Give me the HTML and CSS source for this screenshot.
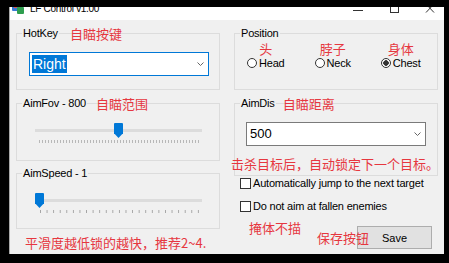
FILE: index.html
```html
<!DOCTYPE html>
<html lang="en">
<head>
  <meta charset="UTF-8" />
  <meta name="viewport" content="width=device-width, initial-scale=1.0" />
  <title>LF Control v1.00</title>
  <link rel="stylesheet" href="styles.css">
</head>
<body>
  <div class="window">
    <div class="titlebar">
      <svg class="app-icon" viewBox="0 0 14 14">
        <rect x="1" y="2" width="8" height="8" rx="1" fill="#3a7bd5"/>
        <rect x="6" y="6" width="7" height="7" rx="1" fill="#2e9e4f"/>
        <rect x="3" y="4" width="3" height="3" fill="#d9534f"/>
      </svg>
      <span class="title">LF Control v1.00</span>
      <div class="caption">
        <svg class="cap-btn" viewBox="0 0 10 10"><line x1="0" y1="6.5" x2="10" y2="6.5" stroke="#333" /></svg>
        <svg class="cap-btn" viewBox="0 0 10 10"><rect x="1.5" y="0.5" width="8" height="8" fill="none" stroke="#333" /></svg>
        <svg class="cap-btn" viewBox="0 0 10 10"><path d="M1 0 L9 8.5 M9 0 L1 8.5" stroke="#333" /></svg>
      </div>
    </div>

    <div class="client">
      <div class="col">
        <div class="group g-hotkey">
          <div class="legend"><span class="legend-text">HotKey</span><span class="note wide">自瞄按键</span></div>
          <div class="combo focused">
            <span class="combo-value selected">Right</span>
            <svg class="chev" viewBox="0 0 7 4"><polyline points="0.5,0.5 3.5,3.5 6.5,0.5" fill="none" stroke="#666" /></svg>
          </div>
        </div>

        <div class="group g-fov">
          <div class="legend"><span class="legend-text">AimFov - 800</span><span class="note">自瞄范围</span></div>
          <div class="slider">
            <div class="track"><span class="thumb" style="--p: 0.5"></span></div>
            <div class="ticks dense"></div>
          </div>
        </div>

        <div class="group g-speed">
          <div class="legend"><span class="legend-text">AimSpeed - 1</span></div>
          <div class="slider">
            <div class="track"><span class="thumb" style="--p: 0"></span></div>
            <div class="ticks sparse"></div>
          </div>
        </div>

        <p class="note note-bottom">平滑度越低锁的越快，推荐2~4.</p>
      </div>

      <div class="col col-right">
        <div class="group g-position">
          <div class="legend"><span class="legend-text">Position</span></div>
          <div class="radios">
            <div class="radio-item">
              <span class="note">头</span>
              <label class="radio"><span class="dot"></span>Head</label>
            </div>
            <div class="radio-item">
              <span class="note">脖子</span>
              <label class="radio"><span class="dot"></span>Neck</label>
            </div>
            <div class="radio-item">
              <span class="note">身体</span>
              <label class="radio"><span class="dot checked"></span>Chest</label>
            </div>
          </div>
        </div>

        <div class="group g-dis">
          <div class="legend"><span class="legend-text">AimDis</span><span class="note narrow">自瞄距离</span></div>
          <div class="combo">
            <span class="combo-value plain">500</span>
            <svg class="chev" viewBox="0 0 7 4"><polyline points="0.5,0.5 3.5,3.5 6.5,0.5" fill="none" stroke="#666" /></svg>
          </div>
        </div>

        <label class="check first"><span class="box"></span>Automatically jump to the next target</label>
        <label class="check"><span class="box"></span>Do not aim at fallen enemies</label>

        <div class="actions">
          <button class="btn">Save</button>
        </div>

        <span class="note tip tip-kill">击杀目标后，自动锁定下一个目标。</span>
        <span class="note tip tip-cover">掩体不描</span>
        <span class="note tip tip-save">保存按钮</span>
      </div>
    </div>
  </div>
</body>
</html>
```

FILE: styles.css
```css
body {
  margin: 0;
  background: #000;
  font-family: "Liberation Sans", Arial, sans-serif;
  font-size: 11px;
  letter-spacing: -0.2px;
  color: #000;
}
.window {
  margin: 7px 0 0 9px;
  width: 435px;
  height: 247px;
  box-sizing: border-box;
  border-left: 1px solid #a8a8a8;
  background: #f0f0f0;
  overflow: hidden;
}

/* title bar, top part is cut off by the screen edge */
.titlebar {
  height: 13px;
  background: #fff;
  display: flex;
  align-items: flex-start;
  overflow: hidden;
}
.app-icon {
  flex: none;
  width: 14px;
  height: 14px;
  margin: -6px 0 0 1px;
}
.title {
  font-size: 10px;
  line-height: 12px;
  letter-spacing: -0.3px;
  margin: -4px 0 0 5px;
  white-space: nowrap;
}
.caption {
  display: flex;
  margin: -3px 9px 0 auto;
}
.cap-btn {
  width: 10px;
  height: 10px;
}
.cap-btn + .cap-btn {
  margin-left: 26px;
}

.client {
  display: grid;
  grid-template-columns: 204px 204px;
  column-gap: 14px;
  padding: 13px 0 0 6px;
}
.col-right {
  position: relative;
}

/* group boxes */
.group {
  position: relative;
  box-sizing: border-box;
  border: 1px solid #dcdcdc;
}
.legend {
  position: absolute;
  top: -8px;
  left: 5px;
  display: flex;
  align-items: center;
  line-height: 14px;
  white-space: nowrap;
}
.legend-text {
  background: #f0f0f0;
  padding: 0 1px;
}
.legend .note {
  margin-left: 9px;
}
.legend .note.wide {
  margin-left: 11px;
}
.legend .note.narrow {
  margin-left: 7px;
}
.g-hotkey,
.g-position {
  height: 57px;
}
.g-fov {
  height: 58px;
  margin-top: 13px;
}
.g-speed {
  height: 56px;
  margin-top: 12px;
}
.g-dis {
  height: 73px;
  margin-top: 13px;
}

/* red notes */
.note {
  color: #e6373f;
  font-family: "Noto Sans CJK SC", sans-serif;
  font-size: 13px;
  line-height: 13px;
  letter-spacing: 0;
  white-space: nowrap;
}
.note-bottom {
  margin: 7px 0 0 9px;
}
.tip {
  position: absolute;
}
.tip-kill {
  left: -3px;
  top: 124px;
}
.tip-cover {
  left: 15px;
  top: 188px;
}
.tip-save {
  left: 83px;
  top: 198px;
}

/* combobox */
.combo {
  display: flex;
  align-items: center;
  box-sizing: border-box;
  width: 180px;
  height: 24px;
  margin: 18px 0 0 11px;
  padding: 0 4px 0 2px;
  background: #fff;
  border: 1px solid #7a7a7a;
}
.g-hotkey .combo {
  margin-left: 12px;
}
.combo.focused {
  border-color: #0078d7;
}
.combo-value {
  line-height: 18px;
  letter-spacing: 0;
}
.combo-value.selected {
  font-size: 14px;
  background: #0078d7;
  color: #fff;
  padding: 0 1px;
}
.combo-value.plain {
  font-size: 13px;
  padding-left: 1px;
}
.chev {
  width: 7px;
  height: 4px;
  margin-left: auto;
}

/* sliders */
.slider {
  width: 167px;
  margin: 25px 0 0 18px;
}
.track {
  position: relative;
  height: 3px;
  background: #dcdcdc;
}
.thumb {
  position: absolute;
  top: -6px;
  left: calc(var(--p) * (100% - 9px));
  width: 9px;
  height: 15px;
  background: #0078d7;
  border-radius: 1px;
  clip-path: polygon(0 0, 100% 0, 100% 68%, 50% 100%, 0 68%);
}
.ticks {
  height: 3px;
  margin-top: 8px;
}
.ticks.dense {
  width: 160px;
  margin-left: 4px;
  background: repeating-linear-gradient(90deg, #b8b8b8 0 1px, transparent 1px 3px);
}
.ticks.sparse {
  width: 159px;
  margin-left: 5px;
  background: linear-gradient(90deg, #a4a4a4 1px, transparent 1px) 0 0 / 6.58px 100%;
}

/* radios */
.radios {
  display: flex;
  gap: 30px;
  padding: 8px 0 0 12px;
}
.radio-item {
  display: flex;
  flex-direction: column;
  align-items: center;
}
.radio-item .note {
  margin-bottom: 2px;
}
.radio {
  display: flex;
  align-items: center;
  gap: 2px;
  height: 12px;
  line-height: 12px;
}
.dot {
  width: 10px;
  height: 10px;
  box-sizing: border-box;
  border: 1px solid #333;
  border-radius: 50%;
  background: #fff;
}
.dot.checked {
  background: radial-gradient(circle, #333 0 2.5px, #fff 3px);
}

/* checkboxes */
.check {
  display: flex;
  align-items: center;
  gap: 2px;
  height: 11px;
  line-height: 11px;
  margin: 12px 0 0 6px;
  white-space: nowrap;
}
.check.first {
  margin-top: 2px;
}
.box {
  width: 11px;
  height: 11px;
  box-sizing: border-box;
  border: 1px solid #333;
  background: #fff;
}

.actions {
  display: flex;
  justify-content: flex-end;
  margin: 14px 6px 0 0;
}
.btn {
  width: 75px;
  height: 23px;
  padding: 0;
  box-sizing: border-box;
  border: 1px solid #adadad;
  background: #e1e1e1;
  font-family: inherit;
  font-size: 11px;
  color: #000;
}
```
